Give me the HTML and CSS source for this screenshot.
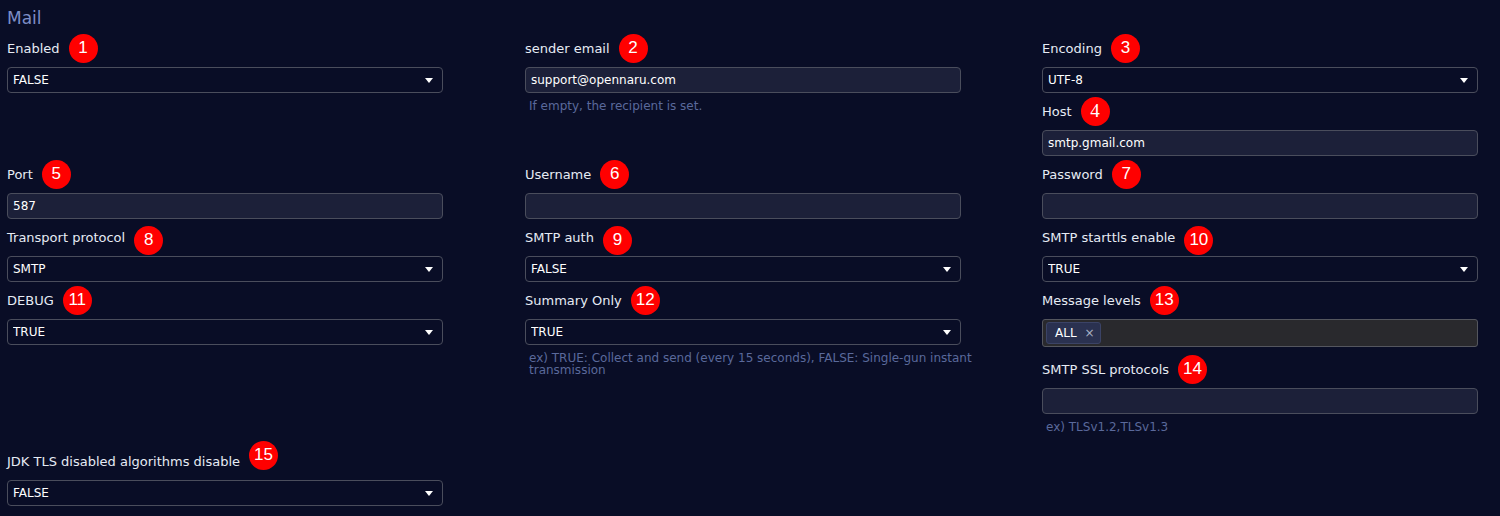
FILE: index.html
```html
<!DOCTYPE html>
<html lang="en">
	<head>
		<meta charset="UTF-8">
		<meta name="viewport" content="width=device-width, initial-scale=1">
		<title>Mail settings</title>
		<link rel="stylesheet" href="styles.css">
	</head>
	<body>
		<section class="panel">
			<h2 class="panel-title">Mail</h2>

			<div class="grid">
				<div class="cell">
					<div class="field">
						<label class="field-label" for="enabled">Enabled <span class="badge">1</span></label>
						<div class="select-wrap">
							<select id="enabled" class="control select"><option>FALSE</option><option>TRUE</option></select>
							<svg class="caret" width="8" height="5" viewBox="0 0 8 5"><path d="M0 0h8L4 5z" fill="#fff"/></svg>
						</div>
					</div>
				</div>

				<div class="cell">
					<div class="field">
						<label class="field-label" for="sender">sender email <span class="badge">2</span></label>
						<input id="sender" class="control input" value="support@opennaru.com">
						<small class="help">If empty, the recipient is set.</small>
					</div>
				</div>

				<div class="cell">
					<div class="field">
						<label class="field-label" for="encoding">Encoding <span class="badge">3</span></label>
						<div class="select-wrap">
							<select id="encoding" class="control select"><option>UTF-8</option></select>
							<svg class="caret" width="8" height="5" viewBox="0 0 8 5"><path d="M0 0h8L4 5z" fill="#fff"/></svg>
						</div>
					</div>
					<div class="field">
						<label class="field-label" for="host">Host <span class="badge badge-serif">4</span></label>
						<input id="host" class="control input" value="smtp.gmail.com">
					</div>
				</div>

				<div class="cell">
					<div class="field">
						<label class="field-label" for="port">Port <span class="badge">5</span></label>
						<input id="port" class="control input" value="587">
					</div>
				</div>

				<div class="cell">
					<div class="field">
						<label class="field-label" for="username">Username <span class="badge">6</span></label>
						<input id="username" class="control input">
					</div>
				</div>

				<div class="cell">
					<div class="field">
						<label class="field-label" for="password">Password <span class="badge">7</span></label>
						<input id="password" type="password" class="control input">
					</div>
				</div>

				<div class="cell">
					<div class="field">
						<label class="field-label" for="protocol">Transport protocol <span class="badge badge-low">8</span></label>
						<div class="select-wrap">
							<select id="protocol" class="control select"><option>SMTP</option></select>
							<svg class="caret" width="8" height="5" viewBox="0 0 8 5"><path d="M0 0h8L4 5z" fill="#fff"/></svg>
						</div>
					</div>
				</div>

				<div class="cell">
					<div class="field">
						<label class="field-label" for="auth">SMTP auth <span class="badge badge-low">9</span></label>
						<div class="select-wrap">
							<select id="auth" class="control select"><option>FALSE</option><option>TRUE</option></select>
							<svg class="caret" width="8" height="5" viewBox="0 0 8 5"><path d="M0 0h8L4 5z" fill="#fff"/></svg>
						</div>
					</div>
				</div>

				<div class="cell">
					<div class="field">
						<label class="field-label" for="starttls">SMTP starttls enable <span class="badge badge-low">10</span></label>
						<div class="select-wrap">
							<select id="starttls" class="control select"><option>TRUE</option><option>FALSE</option></select>
							<svg class="caret" width="8" height="5" viewBox="0 0 8 5"><path d="M0 0h8L4 5z" fill="#fff"/></svg>
						</div>
					</div>
				</div>

				<div class="cell">
					<div class="field">
						<label class="field-label" for="debug">DEBUG <span class="badge">11</span></label>
						<div class="select-wrap">
							<select id="debug" class="control select"><option>TRUE</option><option>FALSE</option></select>
							<svg class="caret" width="8" height="5" viewBox="0 0 8 5"><path d="M0 0h8L4 5z" fill="#fff"/></svg>
						</div>
					</div>
				</div>

				<div class="cell">
					<div class="field">
						<label class="field-label" for="summary">Summary Only <span class="badge">12</span></label>
						<div class="select-wrap">
							<select id="summary" class="control select"><option>TRUE</option><option>FALSE</option></select>
							<svg class="caret" width="8" height="5" viewBox="0 0 8 5"><path d="M0 0h8L4 5z" fill="#fff"/></svg>
						</div>
						<small class="help">ex) TRUE: Collect and send (every 15 seconds), FALSE: Single-gun instant transmission</small>
					</div>
				</div>

				<div class="cell">
					<div class="field field-multi">
						<label class="field-label">Message levels <span class="badge">13</span></label>
						<div class="control multi">
							<span class="chip">ALL <span class="chip-remove">×</span></span>
						</div>
					</div>
					<div class="field">
						<label class="field-label" for="ssl">SMTP SSL protocols <span class="badge">14</span></label>
						<input id="ssl" class="control input">
						<small class="help">ex) TLSv1.2,TLSv1.3</small>
					</div>
				</div>

				<div class="cell">
					<div class="field">
						<label class="field-label" for="jdk">JDK TLS disabled algorithms disable <span class="badge badge-high">15</span></label>
						<div class="select-wrap">
							<select id="jdk" class="control select"><option>FALSE</option><option>TRUE</option></select>
							<svg class="caret" width="8" height="5" viewBox="0 0 8 5"><path d="M0 0h8L4 5z" fill="#fff"/></svg>
						</div>
					</div>
				</div>
			</div>
		</section>
	</body>
</html>
```

FILE: styles.css
```css
body {
  margin: 0;
  background: #090d26;
  color: #e6ebf4;
  font-family: "DejaVu Sans", Verdana, sans-serif;
}
.panel {
  padding: 8px 7px 0;
}
.panel-title {
  margin: 0 0 10px;
  font-size: 17px;
  line-height: 20px;
  font-weight: normal;
  color: #7d8ec6;
}
.grid {
  display: grid;
  grid-template-columns: 518px 517px 1fr;
  align-items: start;
}
.field {
  margin-bottom: 8px;
}
.field-multi {
  margin-bottom: 12px;
}
.field-label {
  display: flex;
  align-items: center;
  gap: 9px;
  height: 20px;
  margin-bottom: 9px;
  font-size: 13px;
  white-space: nowrap;
}
.badge {
  flex: none;
  display: flex;
  align-items: center;
  justify-content: center;
  width: 29px;
  height: 29px;
  border-radius: 50%;
  background: #ff0000;
  color: #fff;
  font-family: "Liberation Sans", Arial, sans-serif;
  font-size: 17px;
}
.badge-serif {
  font-family: "Liberation Serif", "Times New Roman", serif;
  font-size: 19px;
}
.badge-low {
  position: relative;
  top: 3px;
}
.badge-high {
  position: relative;
  top: -6px;
}
.control {
  display: block;
  box-sizing: border-box;
  width: 436px;
  height: 26px;
  margin: 0;
  padding: 0 5px;
  border: 1px solid #4a4d5c;
  border-radius: 4px;
  color: #fff;
  font-family: "DejaVu Sans", Verdana, sans-serif;
  font-size: 12px;
  outline: none;
}
.input {
  background: #1c2039;
}
.select-wrap {
  position: relative;
  width: 436px;
}
.select {
  appearance: none;
  -webkit-appearance: none;
  background: #090d26;
}
.caret {
  position: absolute;
  right: 10px;
  top: 11px;
  pointer-events: none;
}
.multi {
  display: flex;
  align-items: center;
  height: 28px;
  padding: 0 3px;
  background: #29292d;
  border-color: #54565e;
  border-radius: 3px;
}
.chip {
  display: flex;
  align-items: center;
  gap: 8px;
  height: 22px;
  box-sizing: border-box;
  padding: 0 5px 0 8px;
  background: #2a3150;
  border: 1px solid #3b4366;
  border-radius: 3px;
  font-size: 12px;
}
.chip-remove {
  color: #aab1c6;
  font-size: 12px;
}
.help {
  display: block;
  margin: 7px 0 18px;
  padding-left: 4px;
  font-size: 12px;
  line-height: 12px;
  color: #5a699b;
}
```
